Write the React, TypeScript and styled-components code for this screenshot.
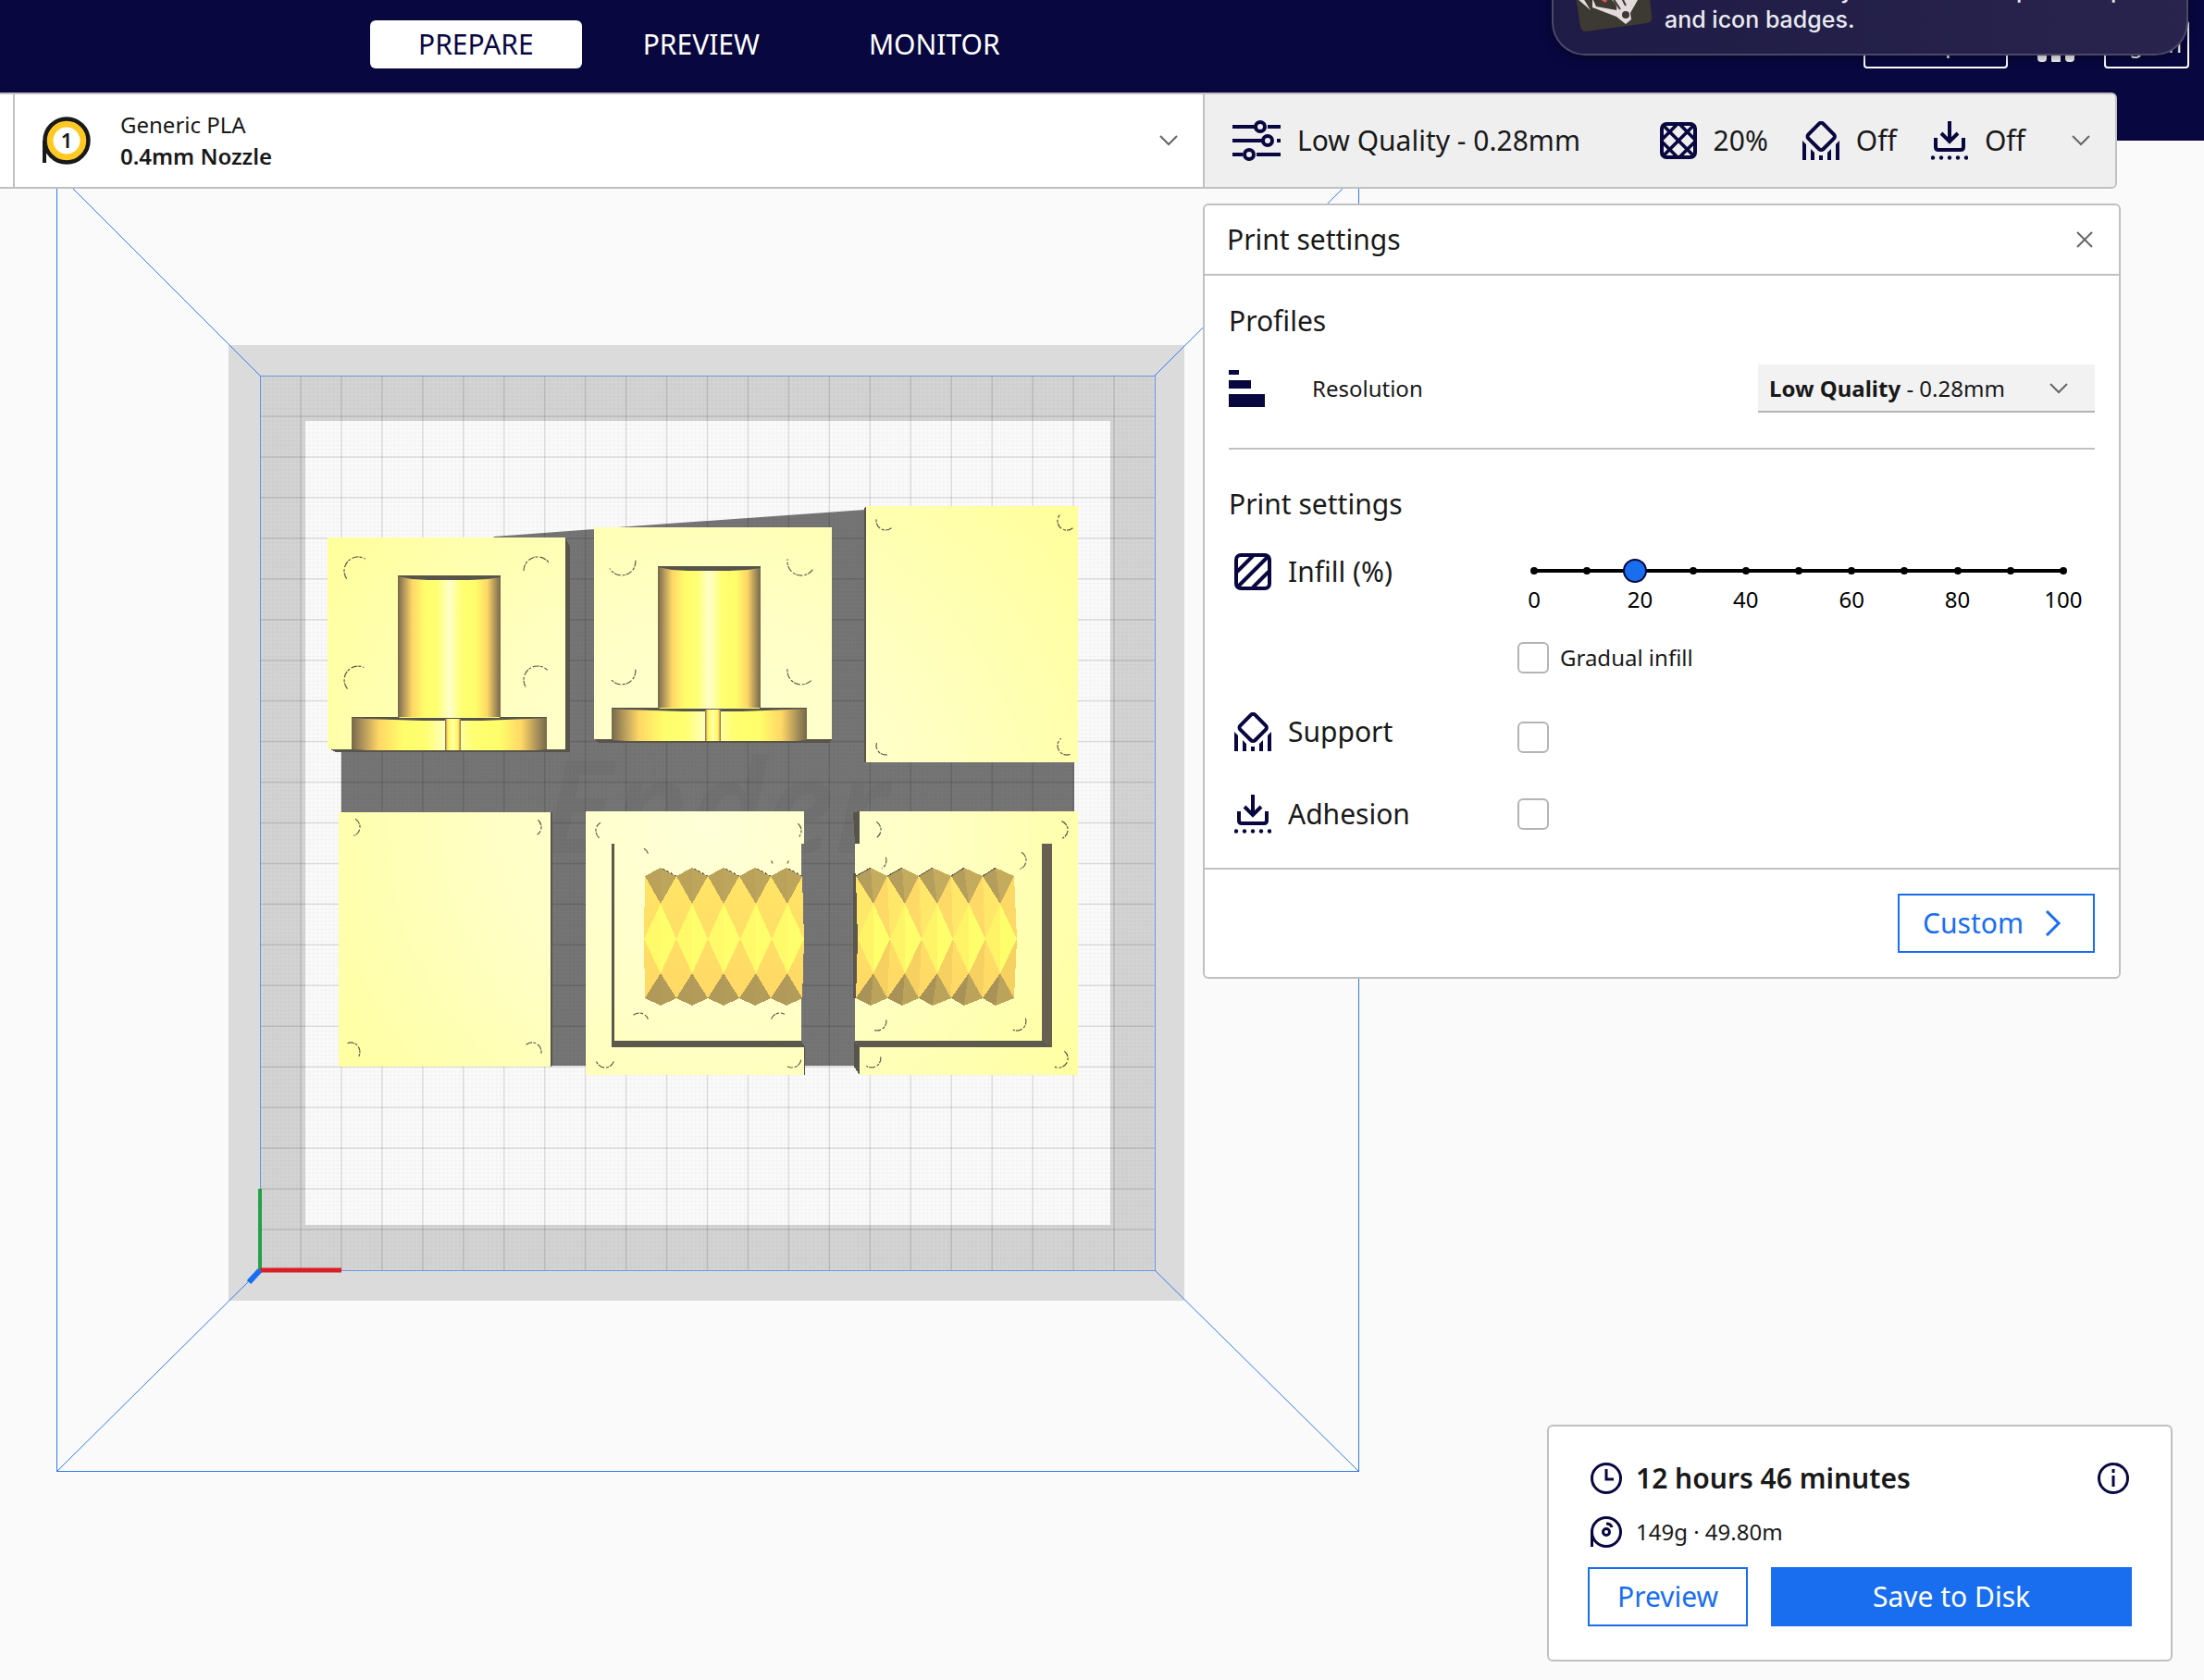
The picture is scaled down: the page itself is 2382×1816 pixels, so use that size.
import React, { useState } from "react";
import styled, { createGlobalStyle, css } from "styled-components";

const navy = "#08073f";
const blue = "#196ef0";
const line = "#c0c0c0";
const ink = "#191919";

const GlobalStyle = createGlobalStyle`
  * { box-sizing: border-box; }
  body {
    margin: 0;
    background: #fafafa;
    color: ${ink};
    font-family: "Noto Sans", "Open Sans", sans-serif;
    font-size: 24px;
    line-height: 32px;
  }
  button, select, input { font: inherit; color: inherit; margin: 0; }
  svg { display: block; flex: none; }
`;

/* ---------- page frame ---------- */

const Page = styled.div`
  display: grid;
  grid-template-columns: minmax(0, 1fr);
  min-height: 100vh;
  overflow: hidden;
`;

const SceneLayer = styled.div`
  grid-area: 1 / 1;
  overflow: hidden;
  min-height: 0;
  height: 100vh;
`;

const Shell = styled.div`
  grid-area: 1 / 1;
  position: relative;
  display: flex;
  flex-direction: column;
  align-items: flex-end;
  min-height: 100vh;
  padding-bottom: 20px;
`;

const Header = styled.header`
  align-self: stretch;
  display: flex;
  justify-content: space-between;
  align-items: flex-start;
  height: 152px;
  padding: 22px 16px 0 400px;
  background: ${navy};
`;

const Nav = styled.nav`
  display: flex;
  gap: 14px;
`;

const Tab = styled.button<{ $active?: boolean }>`
  height: 52px;
  padding: 0 52px;
  border: 0;
  border-radius: 6px;
  font-size: 30px;
  line-height: 40px;
  cursor: pointer;
  background: ${(p) => (p.$active ? "#fff" : "transparent")};
  color: ${(p) => (p.$active ? navy : "#fff")};
`;

const Account = styled.div`
  display: flex;
  align-items: center;
  gap: 31px;
`;

const HeaderButton = styled.button<{ $width: number }>`
  width: ${(p) => p.$width}px;
  height: 52px;
  padding: 0;
  border: 2px solid #fff;
  border-radius: 4px;
  background: transparent;
  color: #fff;
  cursor: pointer;
`;

/* ---------- desktop notification ---------- */

const Notification = styled.aside`
  position: absolute;
  top: 0;
  right: 17px;
  width: 688px;
  height: 60px;
  overflow: hidden;
  display: flex;
  gap: 12px;
  padding-left: 24px;
  border: 2px solid #4b4868;
  border-top: 0;
  border-radius: 0 0 36px 36px;
  background: linear-gradient(90deg, #1e1b46, #28244d);
  box-shadow: 0 2px 12px rgba(0, 0, 0, 0.4);
  color: #e9e9ef;
  font-family: Inter, sans-serif;
  font-size: 25px;
  font-weight: 500;
`;

const Message = styled.div`
  display: flex;
  flex-direction: column;
  justify-content: flex-end;
  height: 37px;
  line-height: 32px;
  white-space: nowrap;
`;

const MessageLine = styled.span`
  display: grid;
  grid-template-columns: 190px 190px 102px 1fr;
`;

/* ---------- stage toolbar ---------- */

const Toolbar = styled.div`
  align-self: stretch;
  display: flex;
  height: 104px;
  margin: -52px 94px 0 0;
  border: 2px solid ${line};
  border-left: 0;
  border-radius: 0 6px 6px 0;
  overflow: hidden;
  background: #fff;
`;

const MachineEdge = styled.div`
  width: 16px;
  border-right: 2px solid ${line};
`;

const Material = styled.button`
  flex: 1;
  display: flex;
  align-items: center;
  gap: 32px;
  padding: 0 27px 0 30px;
  border: 0;
  background: #fff;
  text-align: left;
  cursor: pointer;
`;

const MaterialText = styled.span`
  flex: 1;
  display: flex;
  flex-direction: column;
  line-height: 34px;
`;

const Nozzle = styled.strong`
  font-weight: 600;
`;

const Summary = styled.button`
  display: flex;
  align-items: center;
  width: 986px;
  padding: 0 27px 0 30px;
  border: 0;
  border-left: 2px solid ${line};
  background: #efefef;
  font-size: 30px;
  line-height: 40px;
  text-align: left;
  cursor: pointer;
`;

const SummaryTitle = styled.span`
  flex: 1;
  padding-left: 18px;
`;

const SummaryItem = styled.span`
  display: flex;
  align-items: center;
  gap: 18px;
  margin-right: 37px;
`;

const ChevronBox = styled.span`
  padding-left: 13px;
`;

/* ---------- print settings panel ---------- */

const card = css`
  border: 2px solid ${line};
  border-radius: 6px;
  background: #fff;
`;

const Panel = styled.section`
  ${card}
  width: 992px;
  margin: 16px 90px 0 0;
`;

const PanelHead = styled.div`
  display: flex;
  align-items: center;
  justify-content: space-between;
  height: 76px;
  padding: 0 28px 0 24px;
  border-bottom: 2px solid ${line};
`;

const Title = styled.h2`
  margin: 0;
  font-size: 30px;
  line-height: 42px;
  font-weight: 400;
`;

const IconButton = styled.button`
  display: flex;
  padding: 0;
  border: 0;
  background: transparent;
  cursor: pointer;
`;

const PanelBody = styled.div`
  padding: 28px 26px 34px;
`;

const ProfileRow = styled.div`
  display: flex;
  align-items: center;
  gap: 50px;
  padding: 26px 0 38px;
`;

const ProfileLabel = styled.label`
  flex: 1;
`;

const SelectBox = styled.div`
  display: grid;
  width: 364px;
`;

const Select = styled.select`
  grid-area: 1 / 1;
  appearance: none;
  width: 100%;
  height: 52px;
  padding: 0 12px;
  border: 0;
  border-bottom: 2px solid #b4b4b4;
  border-radius: 0;
  background: #f2f2f2;
  color: transparent;
  cursor: pointer;
`;

const SelectFace = styled.span`
  grid-area: 1 / 1;
  display: flex;
  align-items: center;
  justify-content: space-between;
  padding: 0 29px 0 12px;
  pointer-events: none;
`;

const Rule = styled.hr`
  height: 2px;
  margin: 0 0 38px;
  border: 0;
  background: ${line};
`;

const Settings = styled.div`
  display: flex;
  flex-direction: column;
  gap: 42px;
  padding-top: 32px;
`;

const SettingRow = styled.div<{ $align: "start" | "center" | "end"; $height?: number }>`
  display: grid;
  grid-template-columns: 312px minmax(0, 1fr);
  align-items: ${(p) => p.$align};
  min-height: ${(p) => p.$height ?? 0}px;
`;

const SettingLabel = styled.label<{ $top?: boolean }>`
  align-self: ${(p) => (p.$top ? "start" : "auto")};
  display: flex;
  align-items: center;
  gap: 18px;
  padding-left: 6px;
  font-size: 30px;
  line-height: 40px;
`;

const InfillControl = styled.div`
  display: flex;
  flex-direction: column;
`;

const SliderBox = styled.div`
  padding: 0 22px 0 6px;
`;

const SliderStack = styled.div`
  display: grid;
  align-items: center;
  height: 38px;
`;

const Track = styled.div`
  grid-area: 1 / 1;
  display: flex;
  justify-content: space-between;
  align-items: center;
  height: 4px;
  margin: 0 12px;
  background: #000;
`;

const Tick = styled.span`
  width: 8px;
  height: 8px;
  margin: 0 -4px;
  border-radius: 4px;
  background: #000;
`;

const Range = styled.input`
  grid-area: 1 / 1;
  z-index: 1;
  appearance: none;
  width: 100%;
  height: 26px;
  background: transparent;
  cursor: pointer;
  &::-webkit-slider-runnable-track {
    height: 26px;
    background: transparent;
  }
  &::-webkit-slider-thumb {
    appearance: none;
    width: 26px;
    height: 26px;
    border: 2px solid ${navy};
    border-radius: 13px;
    background: ${blue};
  }
`;

const Scale = styled.div`
  display: flex;
  justify-content: space-between;
  padding: 0 12px;
  line-height: 24px;
  color: #000;
`;

const ScaleMark = styled.span`
  display: flex;
  justify-content: center;
  width: 0;
`;

const CheckLabel = styled.label`
  display: flex;
  align-items: center;
  gap: 12px;
  padding-top: 34px;
`;

const Check = styled.input`
  appearance: none;
  width: 34px;
  height: 34px;
  border: 2px solid #b4b4b4;
  border-radius: 6px;
  background: #fff;
  cursor: pointer;
  &:checked {
    background: ${blue};
  }
`;

const PanelFoot = styled.div`
  display: flex;
  justify-content: flex-end;
  padding: 26px;
  border-top: 2px solid ${line};
`;

const Action = styled.button<{ $primary?: boolean; $grow?: boolean; $arrow?: boolean }>`
  display: flex;
  align-items: center;
  justify-content: center;
  gap: 20px;
  height: 64px;
  padding: 0 ${(p) => (p.$arrow ? 25 : 30)}px;
  flex: ${(p) => (p.$grow ? "1" : "none")};
  border: 2px solid ${blue};
  background: ${(p) => (p.$primary ? blue : "#fff")};
  color: ${(p) => (p.$primary ? "#fff" : blue)};
  font-size: 30px;
  line-height: 40px;
  cursor: pointer;
`;

/* ---------- slice result card ---------- */

const Result = styled.section`
  ${card}
  width: 676px;
  margin: auto 34px 0 0;
  padding: 36px 42px;
`;

const ResultRow = styled.div<{ $strong?: boolean }>`
  display: flex;
  align-items: center;
  gap: 14px;
  padding: 0 2px;
  ${(p) =>
    p.$strong
      ? css`
          font-size: 30px;
          line-height: 40px;
          font-weight: 600;
        `
      : css`
          padding-top: 20px;
          line-height: 36px;
        `}
`;

const ResultText = styled.span`
  flex: 1;
`;

const Actions = styled.div`
  display: flex;
  gap: 25px;
  padding-top: 20px;
`;

/* ---------- icons ---------- */

const Chevron = () => (
  <svg width="20" height="12" viewBox="0 0 20 12" fill="none" stroke="#666" strokeWidth="2">
    <path d="M1 1l9 9 9-9" />
  </svg>
);

const SlidersIcon = () => (
  <svg width="52" height="44" viewBox="0 0 52 44" fill="none" stroke={navy} strokeWidth="4">
    <path d="M0 7h24M38 7h14M0 22h33M48 22h4M0 37h11M26 37h26" />
    <circle cx="30" cy="7" r="5" />
    <circle cx="38" cy="22" r="5" />
    <circle cx="18" cy="37" r="5" />
  </svg>
);

const LatticeIcon = () => (
  <svg width="40" height="40" viewBox="0 0 40 40" fill="none" stroke={navy} strokeWidth="4">
    <rect x="2" y="2" width="36" height="36" rx="5" />
    <path strokeWidth="3.6" d="M4 4l32 32M36 4L4 36M22 3l15 15M18 3L3 18M3 22l15 15M37 22L22 37" />
  </svg>
);

const HatchIcon = () => (
  <svg width="40" height="40" viewBox="0 0 40 40" fill="none" stroke={navy} strokeWidth="4">
    <rect x="2" y="2" width="36" height="36" rx="5" />
    <path d="M3 20L20 3M3 37L37 3M20 37L37 20" />
  </svg>
);

const SupportIcon = () => (
  <svg width="40" height="42" viewBox="0 0 40 42" fill={navy}>
    <rect x="9" y="5" width="22.500" height="22.500" rx="3" transform="rotate(45 20 16.300)" fill="none" stroke={navy} strokeWidth="4" />
    <path d="M0 21l4 4v17H0zM40 21l-4 4v17h4zM9 30l4 4v8H9zM31 30l-4 4v8h4zM18 37h4v5h-4z" />
  </svg>
);

const AdhesionIcon = () => (
  <svg width="40" height="42" viewBox="0 0 40 42" fill="none" stroke={navy} strokeWidth="4">
    <path d="M20 0v22M11 13l9 9 9-9M5 18v10q0 3 3 3h24q3 0 3-3V18" />
    <g fill={navy} stroke="none">
      {[2, 11, 20, 29, 38].map((x) => (
        <circle key={x} cx={x} cy="39.500" r="2.200" />
      ))}
    </g>
  </svg>
);

const ResolutionIcon = () => (
  <svg width="40" height="40" viewBox="0 0 40 40" fill={navy}>
    <path d="M0 0h11v5H0zM0 11h24v9H0zM0 26h39v14H0z" />
  </svg>
);

const SpoolOne = () => (
  <svg width="52" height="52" viewBox="0 0 52 52">
    <path d="M2 26v24" stroke={ink} strokeWidth="4" />
    <circle cx="26" cy="26" r="23.500" fill="#ffc924" stroke={ink} strokeWidth="4.500" />
    <circle cx="26" cy="26" r="14.500" fill="#fff" />
    <text x="26" y="34" textAnchor="middle" fontSize="22" fontWeight="600" fill={ink}>
      1
    </text>
  </svg>
);

const ClockIcon = () => (
  <svg width="36" height="36" viewBox="0 0 36 36" fill="none" stroke={navy} strokeWidth="3">
    <circle cx="18" cy="18" r="15.500" />
    <path d="M18 8v11h8" />
  </svg>
);

const SpoolIcon = () => (
  <svg width="36" height="36" viewBox="0 0 36 36" fill="none" stroke={navy} strokeWidth="3">
    <circle cx="18" cy="18" r="15.500" />
    <path d="M2.500 18v16" />
    <circle cx="18" cy="18" r="3.500" />
    <path d="M18 9q5 0 6 4" />
  </svg>
);

const InfoIcon = () => (
  <svg width="36" height="36" viewBox="0 0 36 36" fill="none" stroke={navy} strokeWidth="3">
    <circle cx="18" cy="18" r="15.500" />
    <path d="M18 8v4M18 15v12" />
  </svg>
);

const AppsIcon = () => (
  <svg width="42" height="42" viewBox="0 0 42 42" fill="#f4f4f4">
    {[0, 14, 25].map((y) =>
      [1, 16, 31].map((x) => <rect key={`${x}-${y}`} x={x} y={y} width="10" height="15" rx={x === 16 ? 1 : 4} />)
    )}
  </svg>
);

const AppBadge = () => (
  <svg width="84" height="36" viewBox="0 0 84 36">
    <path d="M0 -4L5 29q1 5 6 5L77 25q6-1 5-7L80-4z" fill="#3d3933" />
    <path d="M1-2h7l8 13zM18 0v8l26 10 10 8 6-5-1-7 8-14z" fill="#e4dcdc" />
    <path d="M18-2h18q10 6 8 13L22 7z" fill="#3d3933" />
    <path d="M26-1h9l-3 4z" fill="#e05050" />
    <circle cx="54" cy="16" r="4" fill="#3d3933" />
    <path d="M40-2l8 12M50-2l4 8" stroke="#3d3933" strokeWidth="2" />
  </svg>
);

/* ---------- build plate drawing ---------- */

const CELL = 43.95;
const edge = "#57544b";

/* centre x, centre y, radius, start angle, end angle */
type Arc = [number, number, number, number, number];

const holes: Arc[] = [
  [387, 617, 15, 145, 300], [581, 617, 15, 180, 330], [387, 735, 15, 140, 295], [581, 735, 15, 150, 315],
  [672, 607, 15, -5, 150], [866, 607, 15, 35, 190], [672, 725, 15, -5, 140], [866, 725, 15, 45, 190],
  [957, 563, 10, 50, 200], [1153, 563, 10, 50, 220], [957, 806, 10, 80, 200], [1153, 806, 10, 70, 230],
  [379, 894, 10, -60, 70], [575, 894, 10, -50, 55], [379, 1137, 10, -110, 30], [575, 1137, 10, -130, 15],
  [654, 898, 10, 130, 240], [856, 898, 10, -50, 40], [654, 1144, 10, 20, 160], [856, 1144, 10, 10, 120],
  [691, 926, 10, -60, -15], [843, 927, 10, 20, 40], [843, 927, 10, 140, 160], [691, 1105, 10, -130, -20],
  [843, 1105, 10, -160, -60],
  [942, 897, 10, -60, 60], [1144, 897, 10, -70, 65], [948, 930, 10, -20, 60], [1099, 930, 10, -60, 70],
  [948, 1126, 10, -10, 110], [1099, 1126, 10, -20, 115], [942, 1171, 10, -10, 125], [1144, 1144, 10, -50, 115],
].map(([x, y, r, a, b]): Arc => [x, y, r, a, b]);

holes[29][1] = 1127 - 23;
holes[30][1] = 1127 - 23;
holes[31][1] = 1144;

const arcPath = ([cx, cy, r, a, b]: Arc) => {
  const at = (d: number) =>
    `${(cx + r * Math.cos((d * Math.PI) / 180)).toFixed(1)} ${(cy + r * Math.sin((d * Math.PI) / 180)).toFixed(1)}`;
  return `M${at(a)}A${r} ${r} 0 ${b - a > 180 ? 1 : 0} 1 ${at(b)}`;
};

const Spindle = ({ x, y }: { x: number; y: number }) => (
  <g>
    <rect x={x + 50} y={y} width="111" height="155" fill="url(#barrel)" />
    <path d={`M${x + 50} ${y}h111v2l-14 2-20 1h-44l-18-1-15-3z`} fill={edge} />
    <rect x={x} y={y + 153} width="211" height="36" fill="url(#barrel)" />
    <path d={`M${x} ${y + 153}h50l3 1h107v-1h51v1l-20 1-50 2h-65l-60-2-16-1z`} fill={edge} />
    <path d={`M${x} ${y + 188}l34 2h154l23-2v3H${x}z`} fill={edge} />
    <rect x={x + 101} y={y + 155} width="17" height="34" fill="url(#barrel)" />
  </g>
);

interface KnurlProps {
  top: number[];
  peak: number[];
  tip: number[];
  mid: number[];
  faceted?: boolean;
}

const Knurl = ({ top, peak, tip, mid, faceted }: KnurlProps) => (
  <g shapeRendering="crispEdges">
    <path
      d={`M${top[0]} 947L${top[5]} 947L${mid[5]} 1015L${top[5]} 1079L${top[0]} 1079L${mid[0]} 1015z`}
      fill="url(#amber)"
    />
    {peak.map((p, i) => (
      <g key={p}>
        {faceted && <path d={`M${top[i]} 948L${tip[i]} 977L${mid[i]} 1015z`} fill="#ffe869" />}
        {faceted && <path d={`M${top[i + 1]} 948L${tip[i]} 977L${mid[i + 1]} 1015z`} fill="#ffd968" />}
        {faceted && <path d={`M${top[i + 1]} 1079L${tip[i]} 1052L${mid[i + 1]} 1015z`} fill="#f6d162" />}
        <path d={`M${mid[i]} 1015L${tip[i]} 977L${mid[i + 1]} 1015L${tip[i]} 1052z`} fill="#ffff6c" />
        <path d={`M${mid[i]} 1015L${tip[i]} 977V1052z`} fill={faceted ? "#fff468" : "#fffa6a"} />
        <path d={`M${top[i]} 947L${p} 938L${top[i + 1]} 947L${tip[i]} 977z`} fill={faceted ? "#c5ab5e" : "#bea55c"} />
        <path d={`M${top[i]} 947L${p} 938L${tip[i]} 977z`} fill={faceted ? "#b59e5c" : "#bba25a"} />
        <path d={`M${top[i]} 1079L${p} 1087L${top[i + 1]} 1079L${tip[i]} 1052z`} fill={faceted ? "#bba35c" : "#b39c5a"} />
        <path d={`M${top[i]} 1079L${p} 1087L${tip[i]} 1052z`} fill={faceted ? "#a99258" : "#b09959"} />
        <path
          d={faceted ? `M${top[i]} 947L${p} 938` : `M${p + 2} 939L${top[i + 1]} 947`}
          stroke={edge}
          strokeWidth="1"
          strokeDasharray={faceted ? undefined : "3 2"}
        />
      </g>
    ))}
  </g>
);

const leftKnurl: KnurlProps = {
  top: [697, 731, 765, 799, 833, 867],
  peak: [714, 748, 782, 816, 850],
  tip: [714, 748, 782, 817, 851],
  mid: [696, 731, 765, 800, 834, 869],
};

const rightKnurl: KnurlProps = {
  top: [925, 959, 993, 1028, 1062, 1096],
  peak: [941, 975, 1008, 1042, 1076],
  tip: [944, 978, 1013, 1047, 1081],
  mid: [927, 962, 996, 1030, 1065, 1099],
  faceted: true,
};

const BuildPlate = () => (
  <svg width="1480" height="1600" viewBox="0 0 1480 1600" role="img" aria-label="Build plate with six parts">
    <defs>
      <pattern id="fine" x="281" y="406" width={CELL / 10} height={CELL / 10} patternUnits="userSpaceOnUse">
        <path d="M0 .5H5M.5 0V5" stroke="#000" strokeOpacity=".03" />
      </pattern>
      <linearGradient id="barrel">
        <stop offset="0" stopColor="#75684a" />
        <stop offset=".05" stopColor="#a8905a" />
        <stop offset=".14" stopColor="#ffd766" />
        <stop offset=".26" stopColor="#fffd6a" />
        <stop offset=".38" stopColor="#ffff72" />
        <stop offset=".5" stopColor="#ffffcc" />
        <stop offset=".62" stopColor="#ffff72" />
        <stop offset=".76" stopColor="#fffd6a" />
        <stop offset=".87" stopColor="#ffd766" />
        <stop offset=".95" stopColor="#a8905a" />
        <stop offset="1" stopColor="#75684a" />
      </linearGradient>
      <linearGradient id="amber" x2="0" y2="1">
        <stop offset="0" stopColor="#ffe466" />
        <stop offset="1" stopColor="#ffd966" />
      </linearGradient>
      <radialGradient id="sheen" gradientUnits="userSpaceOnUse" cx="765" cy="890" r="540">
        <stop offset="0" stopColor="#ffffd8" />
        <stop offset=".45" stopColor="#ffffc4" />
        <stop offset="1" stopColor="#ffff98" />
      </radialGradient>
    </defs>

    <path d="M247 373H1280V1406H247z" fill="#dbdbdb" />
    <path d="M281 406H1248V1373H281z" fill="#d4d4d4" />
    <path d="M330 455H1200V1324H330z" fill="#fbfbfb" />

    <path
      d="M369 800L534 580L642 572L681 569L935 551L1161 700V877L1159 1100L924 1152H596L369 1100z"
      fill="#757575"
    />
    <text x="587" y="922" fontSize="140" fontWeight="600" fontStyle="italic" fill="#000" fillOpacity=".03">
      Ender
    </text>
    <rect x="281" y="406" width="967" height="967" fill="url(#fine)" />
    <g stroke="#000" strokeOpacity=".11" strokeWidth="1.500">
      {Array.from({ length: 21 }, (_, i) => 281 + CELL * (i + 1)).map((x) => (
        <path key={x} d={`M${x} 406V1373`} />
      ))}
      {Array.from({ length: 21 }, (_, i) => 406 + CELL * (i + 1)).map((y) => (
        <path key={y} d={`M281 ${y}H1248`} />
      ))}
    </g>

    <g fill="none" stroke="#2f7bf0" strokeWidth="1">
      <path d="M61.500 186V1591M1468.500 186V1591M61 1590.500H1469" />
      <path d="M61 186L281 406M1469 186L1248 406M61 1591L281 1373M1469 1591L1248 1373" />
      <path d="M281.500 406V1373M1248.500 406V1373M281 406.500H1248M281 1373.500H1248" strokeOpacity=".65" />
    </g>
    <path d="M281 1285V1373" stroke="#24a148" strokeWidth="4" />
    <path d="M281 1373H369" stroke="#da1e28" strokeWidth="5" />
    <path d="M281 1373L269 1386" stroke={blue} strokeWidth="6" />

    <g fill={edge} shapeRendering="crispEdges">
      <path d="M611 581l5 10V813H363l-6-3zM899 799l-3 4H647l-5-4zM934 549l2-2V824h-2zM595 878h2v274l-2 1z" />
      <path d="M922 878l7-1V912h-5zM866 1125l3 7v30h1v-30zM923 1125l6 7v30l-6-9z" />
    </g>
    <g fill="url(#sheen)" shapeRendering="crispEdges">
      <path d="M354 581H611V810H354zM642 570H899V799H642zM936 547H1165V824H936zM366 878H595V1153H366z" />
      <path d="M633 877H869V912H866V1125L869 1132V1162H633z" />
      <path d="M929 877H1165V1162H929V1132L924 1125V912H929z" />
    </g>
    <g shapeRendering="crispEdges">
      <path d="M661 912h3v213h202l3 7H661z" fill="#5b584c" />
      <path d="M924 1125h202V912h11v220H929z" fill="#5e5a4d" />
      <path d="M1126 912h11v220l-11-7z" fill="#675f4f" />
      <path d="M922 944h3l1 30 1 41-2 64h-3z" fill="#5b574c" />
    </g>

    <Spindle x={380} y={622} />
    <Spindle x={661} y={612} />
    <Knurl {...leftKnurl} />
    <Knurl {...rightKnurl} />

    <g fill="none" stroke="#5b584c" strokeWidth="1.200" strokeDasharray="7 1 3 2">
      {holes.map((h) => (
        <path key={h.join("-")} d={arcPath(h)} />
      ))}
    </g>
  </svg>
);

/* ---------- application ---------- */

export default function App() {
  const [infill, setInfill] = useState(19);

  return (
    <>
      <GlobalStyle />
      <Page>
        <SceneLayer>
          <BuildPlate />
        </SceneLayer>
        <Shell>
          <Header>
            <Nav>
              <Tab $active>PREPARE</Tab>
              <Tab>PREVIEW</Tab>
              <Tab>MONITOR</Tab>
            </Nav>
            <Account>
              <HeaderButton $width={156}>Marketplace</HeaderButton>
              <IconButton aria-label="Applications">
                <AppsIcon />
              </IconButton>
              <HeaderButton $width={92}>Sign in</HeaderButton>
            </Account>
          </Header>

          <Toolbar>
            <MachineEdge />
            <Material>
              <SpoolOne />
              <MaterialText>
                <span>Generic PLA</span>
                <Nozzle>0.4mm Nozzle</Nozzle>
              </MaterialText>
              <Chevron />
            </Material>
            <Summary>
              <SlidersIcon />
              <SummaryTitle>Low Quality - 0.28mm</SummaryTitle>
              <SummaryItem>
                <LatticeIcon />
                20%
              </SummaryItem>
              <SummaryItem>
                <SupportIcon />
                Off
              </SummaryItem>
              <SummaryItem>
                <AdhesionIcon />
                Off
              </SummaryItem>
              <ChevronBox>
                <Chevron />
              </ChevronBox>
            </Summary>
          </Toolbar>

          <Panel>
            <PanelHead>
              <Title>Print settings</Title>
              <IconButton aria-label="Close">
                <svg width="18" height="18" viewBox="0 0 18 18" stroke="#666" strokeWidth="2">
                  <path d="M1 1l16 16M17 1L1 17" />
                </svg>
              </IconButton>
            </PanelHead>
            <PanelBody>
              <Title>Profiles</Title>
              <ProfileRow>
                <ResolutionIcon />
                <ProfileLabel htmlFor="resolution">Resolution</ProfileLabel>
                <SelectBox>
                  <Select id="resolution" defaultValue="low">
                    <option value="low">Low Quality - 0.28mm</option>
                  </Select>
                  <SelectFace aria-hidden="true">
                    <span>
                      <b>Low Quality</b> - 0.28mm
                    </span>
                    <Chevron />
                  </SelectFace>
                </SelectBox>
              </ProfileRow>
              <Rule />
              <Title>Print settings</Title>
              <Settings>
                <SettingRow $align="start">
                  <SettingLabel htmlFor="infill">
                    <HatchIcon />
                    Infill (%)
                  </SettingLabel>
                  <InfillControl>
                    <SliderBox>
                      <SliderStack>
                        <Track>
                          {Array.from({ length: 11 }, (_, i) => (
                            <Tick key={i} />
                          ))}
                        </Track>
                        <Range
                          id="infill"
                          type="range"
                          min={0}
                          max={100}
                          value={infill}
                          onChange={(e) => setInfill(Number(e.target.value))}
                        />
                      </SliderStack>
                      <Scale>
                        {[0, 20, 40, 60, 80, 100].map((n) => (
                          <ScaleMark key={n}>{n}</ScaleMark>
                        ))}
                      </Scale>
                    </SliderBox>
                    <CheckLabel>
                      <Check type="checkbox" />
                      Gradual infill
                    </CheckLabel>
                  </InfillControl>
                </SettingRow>
                <SettingRow $align="end" $height={44}>
                  <SettingLabel htmlFor="support" $top>
                    <SupportIcon />
                    Support
                  </SettingLabel>
                  <Check id="support" type="checkbox" />
                </SettingRow>
                <SettingRow $align="center" $height={48}>
                  <SettingLabel htmlFor="adhesion">
                    <AdhesionIcon />
                    Adhesion
                  </SettingLabel>
                  <Check id="adhesion" type="checkbox" />
                </SettingRow>
              </Settings>
            </PanelBody>
            <PanelFoot>
              <Action $arrow>
                Custom
                <svg width="30" height="28" viewBox="0 0 30 28" fill="none" stroke={blue} strokeWidth="3">
                  <path d="M5 1l13 13L5 27" />
                </svg>
              </Action>
            </PanelFoot>
          </Panel>

          <Result>
            <ResultRow $strong>
              <ClockIcon />
              <ResultText>12 hours 46 minutes</ResultText>
              <IconButton aria-label="Details">
                <InfoIcon />
              </IconButton>
            </ResultRow>
            <ResultRow>
              <SpoolIcon />
              <ResultText>149g · 49.80m</ResultText>
            </ResultRow>
            <Actions>
              <Action>Preview</Action>
              <Action $primary $grow>
                Save to Disk
              </Action>
            </Actions>
          </Result>

          <Notification>
            <AppBadge />
            <Message>
              <MessageLine aria-hidden="true">
                <span />
                <span>y</span>
                <span>p</span>
                <span>p</span>
              </MessageLine>
              <span>and icon badges.</span>
            </Message>
          </Notification>
        </Shell>
      </Page>
    </>
  );
}
